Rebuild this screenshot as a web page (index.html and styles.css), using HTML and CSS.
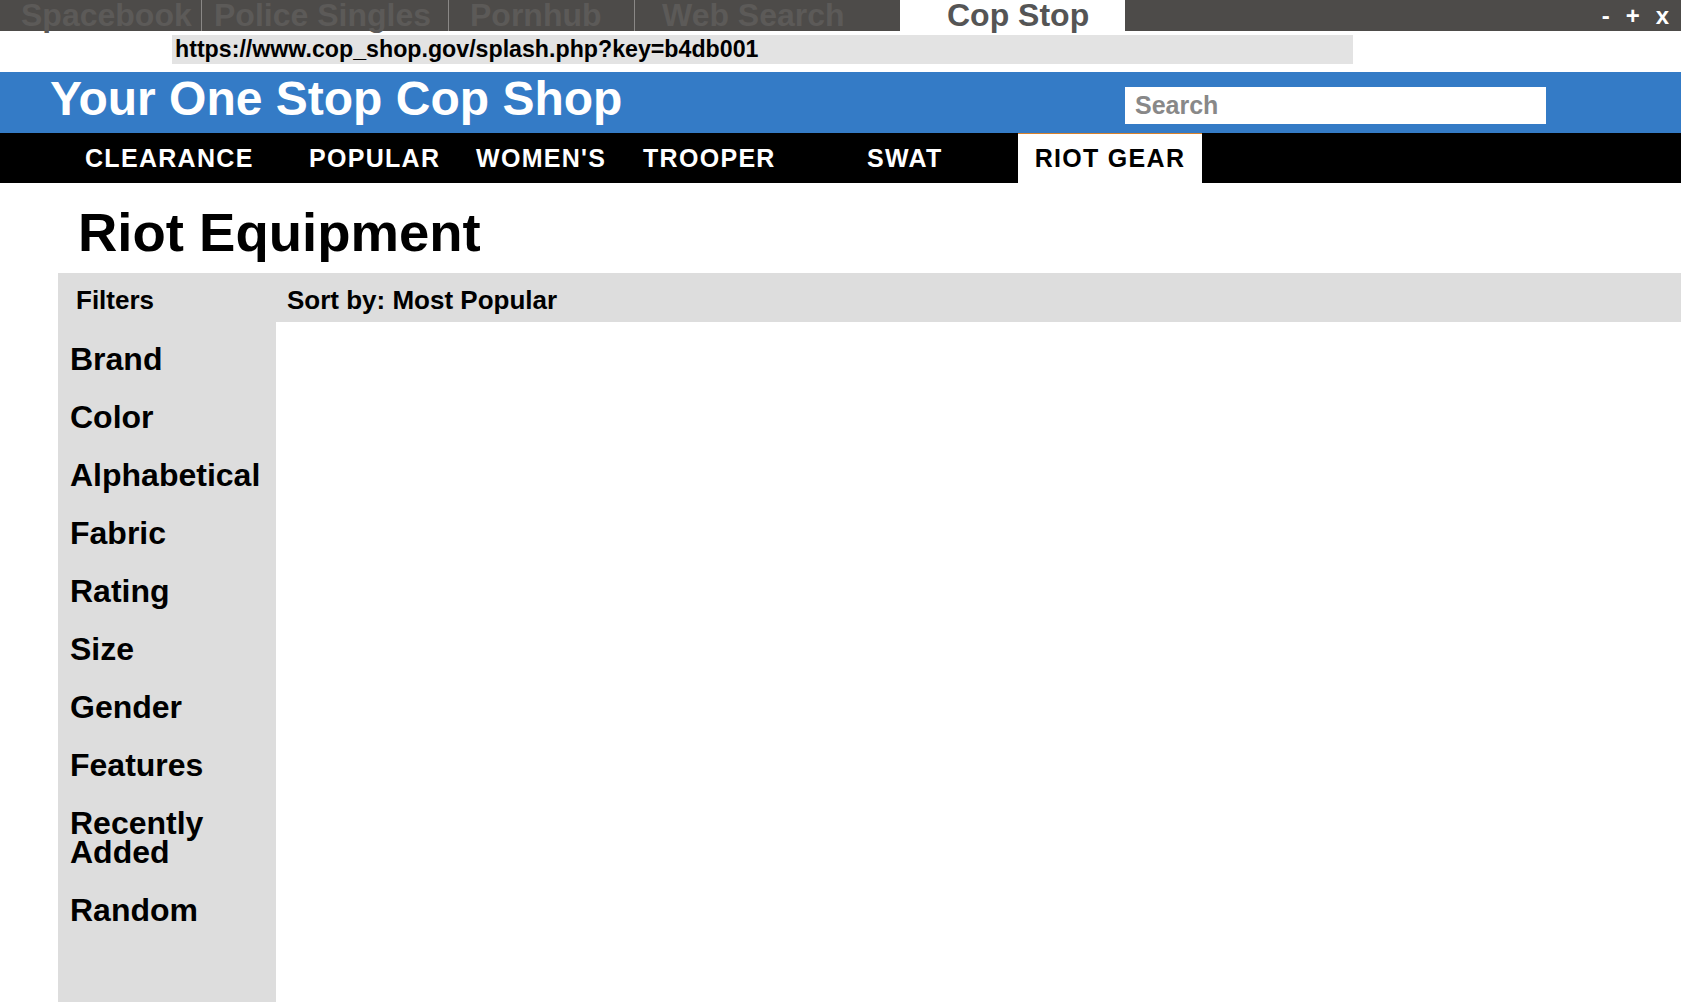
FILE: index.html
```html
<!DOCTYPE html>
<html lang="en">
<head>
<meta charset="utf-8">
<title>Cop Stop</title>
<link rel="stylesheet" href="styles.css">
</head>
<body>
<div class="tabbar">
  <div class="tab tab-1">Spacebook</div>
  <div class="tab tab-2">Police Singles</div>
  <div class="tab tab-3">Pornhub</div>
  <div class="tab tab-4">Web Search</div>
  <div class="tab tab-active">Cop Stop</div>
  <div class="controls"><span>-</span><span>+</span><span>x</span></div>
</div>
<div class="urlrow">
  <div class="url">https://www.cop_shop.gov/splash.php?key=b4db001</div>
</div>
<header class="site-header">
  <h1 class="site-title">Your One Stop Cop Shop</h1>
  <input class="search" type="text" placeholder="Search">
</header>
<nav class="nav">
  <a class="nav-item">CLEARANCE</a>
  <a class="nav-item">POPULAR</a>
  <a class="nav-item">WOMEN'S</a>
  <a class="nav-item">TROOPER</a>
  <a class="nav-item">SWAT</a>
  <a class="nav-item nav-active">RIOT GEAR</a>
</nav>
<h2 class="page-title">Riot Equipment</h2>
<main class="shop">
  <div class="filters-head">Filters</div>
  <div class="sort-head">Sort by: Most Popular</div>
  <ul class="filters">
    <li>Brand</li>
    <li>Color</li>
    <li>Alphabetical</li>
    <li>Fabric</li>
    <li>Rating</li>
    <li>Size</li>
    <li>Gender</li>
    <li>Features</li>
    <li>Recently Added</li>
    <li>Random</li>
  </ul>
  <section class="results"></section>
</main>
</body>
</html>
```

FILE: styles.css
```css
* { box-sizing: border-box; }

html, body {
  margin: 0;
  padding: 0;
}

body {
  font-family: "Liberation Sans", Arial, sans-serif;
  font-weight: bold;
  background: #ffffff;
  color: #000;
  min-height: 100vh;
  display: flex;
  flex-direction: column;
  overflow: hidden;
}

/* ---------- browser tab bar ---------- */
.tabbar {
  display: flex;
  height: 31px;
  background: #4d4b49;
  flex: none;
}

.tab {
  height: 31px;
  font-size: 32px;
  line-height: 31px;
  color: #5c5a58;
  white-space: nowrap;
}

.tab-1 { width: 202px; padding-left: 21px; border-right: 1px solid #8a8886; }
.tab-2 { width: 247px; padding-left: 12px; border-right: 1px solid #8a8886; }
.tab-3 { width: 186px; padding-left: 21px; border-right: 1px solid #8a8886; }
.tab-4 { width: 265px; padding-left: 27px; }

.tab-active {
  width: 225px;
  padding-left: 47px;
  background: #ffffff;
  color: #555555;
}

.controls {
  margin-left: auto;
  display: flex;
  gap: 16px;
  padding-right: 12px;
  color: #ffffff;
  font-size: 24px;
  line-height: 31px;
}

/* ---------- url row ---------- */
.urlrow {
  height: 41px;
  padding: 4px 0 0 172px;
  flex: none;
}

.url {
  width: 1181px;
  height: 29px;
  background: #e3e3e3;
  font-size: 23.2px;
  line-height: 29px;
  padding-left: 3px;
  color: #000;
  white-space: nowrap;
}

/* ---------- site header ---------- */
.site-header {
  display: flex;
  align-items: flex-start;
  height: 61px;
  background: #347bc6;
  flex: none;
}

.site-title {
  margin: 0;
  padding-left: 50px;
  font-size: 48px;
  line-height: 53px;
  color: #ffffff;
  white-space: nowrap;
}

.search {
  margin: 15px 135px 0 auto;
  width: 421px;
  height: 37px;
  border: none;
  outline: none;
  padding: 0 10px;
  background: #ffffff;
  font-family: "Liberation Sans", Arial, sans-serif;
  font-weight: bold;
  font-size: 25px;
}

.search::placeholder { color: #888888; }

/* ---------- nav ---------- */
.nav {
  display: grid;
  grid-template-columns: 224px 167px 167px 224px 151px 184px;
  padding-left: 85px;
  height: 50px;
  background: #000000;
  flex: none;
}

.nav-item {
  color: #ffffff;
  font-size: 25px;
  line-height: 50px;
  letter-spacing: 1.3px;
  white-space: nowrap;
}

.nav-active {
  background: #ffffff;
  color: #000000;
  text-align: center;
  box-shadow: inset 0 1px 0 #d9822b;
}

/* ---------- page ---------- */
.page-title {
  margin: 0;
  padding: 10px 0 0 78px;
  font-size: 54.5px;
  line-height: 80px;
  flex: none;
}

.shop {
  flex: 1;
  margin-left: 58px;
  display: grid;
  grid-template-columns: 218px 1fr;
  grid-template-rows: 49px 1fr;
  background: #dddddd;
}

.filters-head {
  padding: 5px 0 0 18px;
  font-size: 26px;
  line-height: 44px;
}

.sort-head {
  padding: 5px 0 0 11px;
  font-size: 26px;
  line-height: 44px;
}

.filters {
  list-style: none;
  margin: 0;
  padding: 23px 8px 0 12px;
}

.filters li {
  font-size: 32px;
  line-height: 29px;
  margin-bottom: 29px;
}

.results {
  background: #ffffff;
}
```
